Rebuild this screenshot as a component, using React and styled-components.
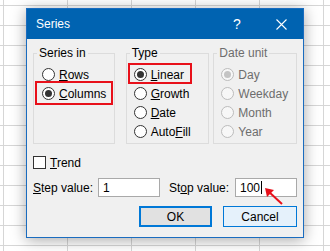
import React from 'react';
import styled, { createGlobalStyle } from 'styled-components';

const Global = createGlobalStyle`
	html, body {
		margin: 0;
		padding: 0;
	}
	body {
		font-family: "Liberation Sans", Arial, sans-serif;
		background-color: #fff;
		background-image:
			linear-gradient(to right, #d6d6d6 1px, transparent 1px),
			linear-gradient(to bottom, #d6d6d6 1px, transparent 1px);
		background-size: 64px 20px;
		background-position: 3px 5px;
	}
`;

const Page = styled.div`
	width: 330px;
	height: 251px;
	box-sizing: border-box;
	padding: 8px 0 0 26px;
	overflow: hidden;
`;

const Dialog = styled.div`
	width: 278px;
	height: 230px;
	box-sizing: border-box;
	border: 1px solid #1a6cbf;
	background: #f0f0f0;
	box-shadow: 0 2px 14px rgba(0, 0, 0, 0.35);
	display: flex;
	flex-direction: column;
	color: #000;
	font-size: 11.5px;
`;

const TitleBar = styled.div`
	height: 30px;
	background: #0063b1;
	color: #fff;
	display: flex;
	align-items: center;
	padding-left: 9px;
	font-size: 12px;
`;

const Title = styled.span`
	flex: 1;
`;

const TitleButton = styled.span`
	width: 44px;
	height: 30px;
	display: flex;
	align-items: center;
	justify-content: center;
	font-size: ${(p) => p.$size || 12}px;
`;

const Body = styled.div`
	padding: 7px 6px 0 6px;
	display: flex;
	flex-direction: column;
`;

const Groups = styled.div`
	display: flex;
`;

const Group = styled.fieldset`
	margin: 0 0 0 ${(p) => p.$ml || 0}px;
	padding: 0;
	width: ${(p) => p.$w}px;
	height: 98px;
	box-sizing: border-box;
	border: 1px solid #dcdcdc;
	min-width: 0;
`;

const Legend = styled.legend`
	margin-left: 3px;
	padding: 0 2px;
	font-size: 12px;
	line-height: 14px;
	color: ${(p) => (p.$disabled ? '#6d6d6d' : '#000')};
`;

const Options = styled.div`
	padding: 5px 0 0 ${(p) => p.$pl || 7}px;
	display: flex;
	flex-direction: column;
`;

const Option = styled.div`
	position: relative;
	height: 19px;
	display: flex;
	align-items: center;
	gap: 4px;
	font-size: 12px;
	color: ${(p) => (p.$disabled ? '#6d6d6d' : '#000')};
`;

const Highlight = styled.span`
	position: absolute;
	top: ${(p) => p.$t}px;
	bottom: ${(p) => p.$b}px;
	left: ${(p) => p.$l}px;
	width: ${(p) => p.$w}px;
	border: 2px solid #e8101a;
	box-sizing: border-box;
	pointer-events: none;
`;

const Radio = styled.span`
	width: 13px;
	height: 13px;
	box-sizing: border-box;
	border-radius: 50%;
	border: 1px solid ${(p) => (p.$disabled ? '#bcbcbc' : '#333')};
	background: ${(p) => (p.$disabled ? '#f7f7f7' : '#fff')};
	display: flex;
	align-items: center;
	justify-content: center;
	flex-shrink: 0;
	&::after {
		content: '';
		display: ${(p) => (p.$checked ? 'block' : 'none')};
		width: 7px;
		height: 7px;
		border-radius: 50%;
		background: ${(p) => (p.$disabled ? '#c4c4c4' : '#333')};
	}
`;

const TrendRow = styled.div`
	margin-top: 9px;
	height: 19px;
	display: flex;
	align-items: center;
	gap: 4px;
	font-size: 12px;
`;

const Checkbox = styled.span`
	width: 13px;
	height: 13px;
	box-sizing: border-box;
	border: 1px solid #333;
	background: #fff;
`;

const FieldRow = styled.div`
	margin-top: 6px;
	display: grid;
	grid-template-columns: 65px 62px 9px 66px 62px;
	align-items: center;
	font-size: 12px;
`;

const Label = styled.span`
	grid-column: ${(p) => p.$col};
`;

const InputBox = styled.div`
	position: relative;
	height: 19px;
	box-sizing: border-box;
	border: 1px solid #a9a9a9;
	background: #fff;
	padding-left: 4px;
	display: flex;
	align-items: center;
	font-size: 12px;
`;

const Caret = styled.span`
	width: 1px;
	height: 13px;
	background: #000;
	margin-left: 1px;
`;

const Arrow = styled.svg`
	position: absolute;
	left: 28px;
	top: 8px;
	overflow: visible;
`;

const Buttons = styled.div`
	margin-top: 9px;
	display: flex;
	justify-content: flex-end;
	gap: 11px;
`;

const Button = styled.div`
	width: ${(p) => p.$w}px;
	height: 21px;
	box-sizing: border-box;
	display: flex;
	align-items: center;
	justify-content: center;
	font-size: 12px;
	background: ${(p) => (p.$primary ? '#e1e1e1' : '#e5f1fb')};
	border: ${(p) => (p.$primary ? '2px' : '1px')} solid #0078d7;
`;

const App = () => (
	<Page>
		<Global />
		<Dialog>
			<TitleBar>
				<Title>Series</Title>
				<TitleButton $size={14}>?</TitleButton>
				<TitleButton>
					<svg width="11" height="11" viewBox="0 0 11 11">
						<path d="M0.5 0.5 L10.5 10.5 M10.5 0.5 L0.5 10.5" stroke="#fff" strokeWidth="1.1" />
					</svg>
				</TitleButton>
			</TitleBar>
			<Body>
				<Groups>
					<Group $w={82}>
						<Legend>Series in</Legend>
						<Options $pl={8}>
							<Option>
								<Radio />
								<span><u>R</u>ows</span>
							</Option>
							<Option>
								<Highlight $t={-3} $b={-2} $l={-7} $w={78} />
								<Radio $checked />
								<span><u>C</u>olumns</span>
							</Option>
						</Options>
					</Group>
					<Group $w={84} $ml={11}>
						<Legend>Type</Legend>
						<Options $pl={7}>
							<Option>
								<Highlight $t={-2} $b={0} $l={-6} $w={64} />
								<Radio $checked />
								<span><u>L</u>inear</span>
							</Option>
							<Option>
								<Radio />
								<span><u>G</u>rowth</span>
							</Option>
							<Option>
								<Radio />
								<span><u>D</u>ate</span>
							</Option>
							<Option>
								<Radio />
								<span>Auto<u>F</u>ill</span>
							</Option>
						</Options>
					</Group>
					<Group $w={84} $ml={4}>
						<Legend $disabled>Date unit</Legend>
						<Options $pl={7}>
							<Option $disabled>
								<Radio $disabled $checked />
								<span>Day</span>
							</Option>
							<Option $disabled>
								<Radio $disabled />
								<span>Weekday</span>
							</Option>
							<Option $disabled>
								<Radio $disabled />
								<span>Month</span>
							</Option>
							<Option $disabled>
								<Radio $disabled />
								<span>Year</span>
							</Option>
						</Options>
					</Group>
				</Groups>
				<TrendRow>
					<Checkbox />
					<span><u>T</u>rend</span>
				</TrendRow>
				<FieldRow>
					<Label $col={1}><u>S</u>tep value:</Label>
					<InputBox>1</InputBox>
					<Label $col={4}>St<u>o</u>p value:</Label>
					<InputBox>
						100
						<Caret />
						<Arrow width="20" height="18" viewBox="0 0 20 18">
							<path d="M18 17 L4 4" stroke="#e8101a" strokeWidth="2" />
							<path d="M1 1 L10 3 L3 10 Z" fill="#e8101a" />
						</Arrow>
					</InputBox>
				</FieldRow>
				<Buttons>
					<Button $w={73} $primary>OK</Button>
					<Button $w={74}>Cancel</Button>
				</Buttons>
			</Body>
		</Dialog>
	</Page>
);

export default App;
